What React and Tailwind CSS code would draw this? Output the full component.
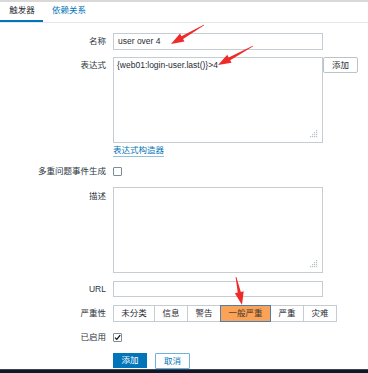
import React from "react";

const font = { fontFamily: '"Liberation Sans", Arial, "Noto Sans CJK SC", sans-serif' };

const severities = ["未分类", "信息", "警告", "一般严重", "严重", "灾难"];
const sevWidths = ["w-[42px]", "w-[34px]", "w-[34px]", "w-[51px]", "w-[34px]", "w-[34px]"];

// red annotation arrows, drawn over the form
const arrows = [
  { from: [204, 25], to: [171, 44] },
  { from: [253, 46], to: [218, 65] },
  { from: [236, 277], to: [242, 305] },
];

function arrowPoints({ from, to }) {
  const [x1, y1] = from;
  const [x2, y2] = to;
  const len = Math.hypot(x2 - x1, y2 - y1);
  const dx = (x2 - x1) / len;
  const dy = (y2 - y1) / len;
  const nx = -dy;
  const ny = dx;
  const L = 13;
  const bx = x2 - dx * L;
  const by = y2 - dy * L;
  const pts = [
    [x1 + nx * 0.4, y1 + ny * 0.4],
    [bx + nx * 1.6, by + ny * 1.6],
    [bx + nx * 4.5, by + ny * 4.5],
    [x2, y2],
    [bx - nx * 4.5, by - ny * 4.5],
    [bx - nx * 1.6, by - ny * 1.6],
    [x1 - nx * 0.4, y1 - ny * 0.4],
  ];
  return pts.map((p) => p.join(",")).join(" ");
}

function Grip() {
  return (
    <svg className="absolute right-[4px] bottom-[4px]" width="8" height="8" viewBox="0 0 8 8">
      {[
        [6, 0], [4, 2], [6, 2], [2, 4], [4, 4], [6, 4], [0, 6], [2, 6], [4, 6], [6, 6],
      ].map(([x, y]) => (
        <rect key={`${x}-${y}`} x={x} y={y} width="1.2" height="1.2" fill="#b8c0c5" />
      ))}
    </svg>
  );
}

function Row({ label, className = "", labelClass = "leading-[17px]", children }) {
  return (
    <div className={`flex ${className}`}>
      <div className={`w-[107px] shrink-0 pr-[1px] text-right text-[#2a363d] ${labelClass}`}>{label}</div>
      <div className="ml-[6px] flex items-start">{children}</div>
    </div>
  );
}

export default function App() {
  return (
    <div className="relative h-[373px] w-[368px] overflow-hidden bg-white text-[8.5px] flex flex-col" style={font}>
      <div className="h-[2px] bg-[#d9d9d9]" />
      <div className="flex h-[21px] border-b border-[#e3e7ea]">
        <div className="w-[43px] border-b-2 border-[#0275b8] text-center leading-[16px] text-[#1f2c33] pl-[1px]">
          触发器
        </div>
        <div className="ml-[9px] leading-[16px] text-[#0275b8]">依赖关系</div>
      </div>

      <Row label="名称" className="mt-[10px]">
        <div className="h-[17px] w-[210px] border border-[#c5cdd2] px-[4px] text-[8.5px] leading-[15px] text-[#1f2c33]">
          user over 4
        </div>
      </Row>

      <Row label="表达式" className="mt-[7px]">
        <div className="relative h-[86px] w-[210px] border border-[#c5cdd2] px-[3px] leading-[15px] text-[#1f2c33]">
          {"{web01:login-user.last()}>4"}
          <Grip />
        </div>
        <button className="h-[16px] w-[35px] rounded-[2px] border border-[#b9c3c8] bg-white text-[8.5px] leading-[14px] text-[#1f2c33]">
          添加
        </button>
      </Row>

      <Row label="" className="mt-[2px]" labelClass="">
        <span className="inline-block border-b border-[#8ec0e0] leading-[11px] text-[#0275b8]">表达式构造器</span>
      </Row>

      <Row label="多重问题事件生成" className="mt-[6px]">
        <div className="mt-[4px] h-[9px] w-[9px] rounded-[1px] border border-[#7e8c94] bg-white" />
      </Row>

      <Row label="描述" className="mt-[7px]" labelClass="leading-[17px] pt-[1px]">
        <div className="relative h-[86px] w-[210px] border border-[#c5cdd2]">
          <Grip />
        </div>
      </Row>

      <Row label="URL" className="mt-[8px]" labelClass="leading-[16px]">
        <div className="h-[16px] w-[210px] border border-[#c5cdd2]" />
      </Row>

      <Row label="严重性" className="mt-[8px]">
        <div className="flex h-[17px]">
          {severities.map((s, i) => (
            <div
              key={s}
              className={`${sevWidths[i]} -ml-[1px] first:ml-0 text-center leading-[15px] border ${
                i === 3
                  ? "relative z-10 border-[#4f7fa6] bg-[#f9a258] text-[#4a3a2c]"
                  : "border-[#c5cdd2] bg-white text-[#1f2c33]"
              }`}
            >
              {s}
            </div>
          ))}
        </div>
      </Row>

      <Row label="已启用" className="mt-[7px]">
        <div className="mt-[4px] flex h-[9px] w-[9px] items-center justify-center rounded-[1px] border border-[#7e8c94] bg-white">
          <svg width="7" height="7" viewBox="0 0 7 7">
            <path d="M1 3.6 L2.8 5.4 L6.2 1.2" fill="none" stroke="#111" strokeWidth="1.3" />
          </svg>
        </div>
      </Row>

      <Row label="" className="mt-[7px]" labelClass="">
        <button className="h-[15px] w-[34px] bg-[#0275b8] text-[8.5px] leading-[15px] text-white">添加</button>
        <button className="ml-[8px] h-[16px] w-[35px] rounded-[1px] border border-[#6fb0dc] bg-white text-[8.5px] leading-[14px] text-[#0275b8]">
          取消
        </button>
      </Row>

      <div className="mt-auto h-[4px] border-t border-[#3a4658] bg-[#0f1826]" />

      <svg className="pointer-events-none absolute inset-0" width="368" height="373">
        {arrows.map((a, i) => (
          <polygon key={i} points={arrowPoints(a)} fill="#ee2a2a" />
        ))}
      </svg>
    </div>
  );
}
